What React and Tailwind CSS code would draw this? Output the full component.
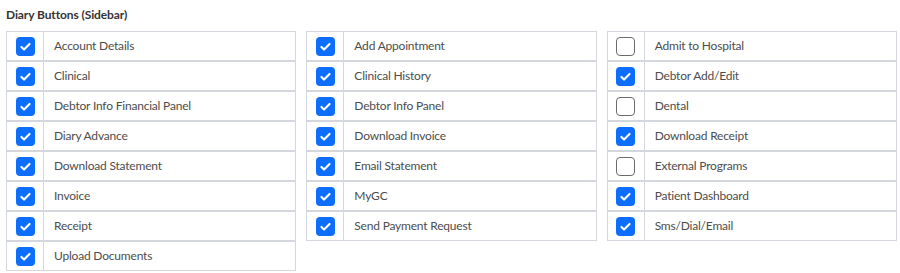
const columns = [
    [
        ["Account Details", true],
        ["Clinical", true],
        ["Debtor Info Financial Panel", true],
        ["Diary Advance", true],
        ["Download Statement", true],
        ["Invoice", true],
        ["Receipt", true],
        ["Upload Documents", true],
    ],
    [
        ["Add Appointment", true],
        ["Clinical History", true],
        ["Debtor Info Panel", true],
        ["Download Invoice", true],
        ["Email Statement", true],
        ["MyGC", true],
        ["Send Payment Request", true],
    ],
    [
        ["Admit to Hospital", false],
        ["Debtor Add/Edit", true],
        ["Dental", false],
        ["Download Receipt", true],
        ["External Programs", false],
        ["Patient Dashboard", true],
        ["Sms/Dial/Email", true],
    ],
];

const Box = ({ checked }) =>
    checked ? (
        <span className="w-[19px] h-[19px] rounded-[4px] bg-[#0d6efd] flex items-center justify-center">
            <svg width="13" height="13" viewBox="0 0 16 16">
                <path d="M3 8.5l3.2 3.2L13 4.8" fill="none" stroke="white" strokeWidth="2.6" strokeLinecap="round" strokeLinejoin="round" />
            </svg>
        </span>
    ) : (
        <span className="w-[19px] h-[19px] rounded-[4px] border border-[#6b6b6b] bg-white" />
    );

const App = () => {
    return (
        <div className="w-[900px] h-[273px] bg-white pl-[6px] pr-[3px] pt-[7px]" style={{ fontFamily: "Lato, 'Noto Sans', sans-serif" }}>
            <div className="text-[12px] font-bold text-[#333] leading-[16px] mb-[8px] tracking-[-0.1px]">Diary Buttons (Sidebar)</div>
            <div className="grid grid-cols-3 gap-x-[10px] items-start">
                {columns.map((col, i) => (
                    <div key={i} className="flex flex-col">
                        {col.map(([label, checked]) => (
                            <div key={label} className="flex h-[30px] border border-[#d4d7de]">
                                <div className="w-[37px] border-r border-[#d4d7de] flex items-center justify-center">
                                    <Box checked={checked} />
                                </div>
                                <div className="flex items-center pl-[10px] text-[12px] text-[#4d4d4d] tracking-[-0.2px]">{label}</div>
                            </div>
                        ))}
                    </div>
                ))}
            </div>
        </div>
    );
};

export default App;
